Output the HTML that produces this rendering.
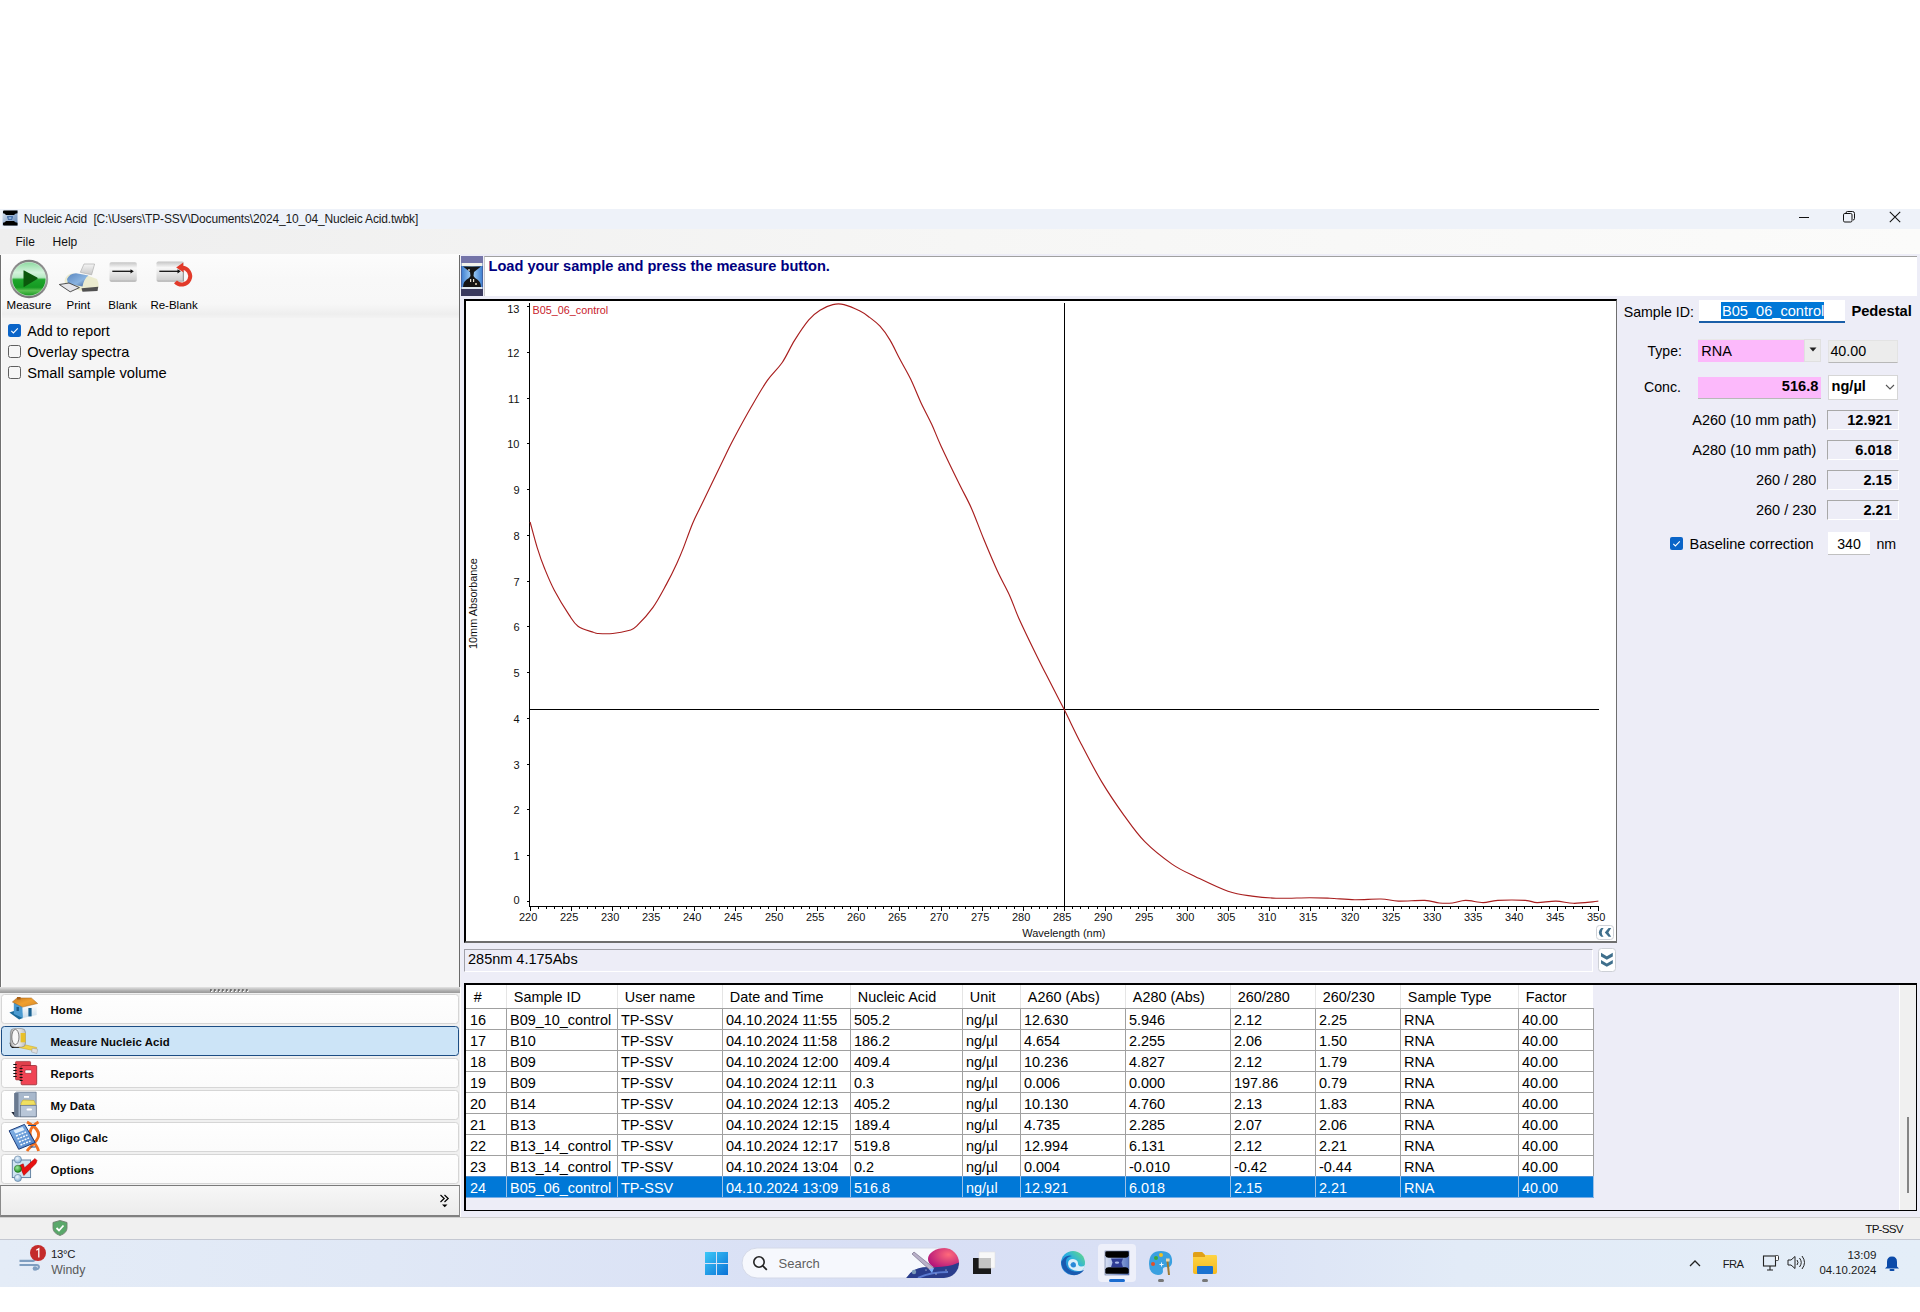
<!DOCTYPE html>
<html><head><meta charset="utf-8"><title>Nucleic Acid</title>
<style>
html,body{margin:0;padding:0;}
body{width:1920px;height:1312px;position:relative;overflow:hidden;background:#fff;font-family:"Liberation Sans",sans-serif;color:#000;}
.t{position:absolute;white-space:nowrap;}
.r{position:absolute;box-sizing:border-box;}
svg{position:absolute;overflow:visible;}
</style></head><body>

<div class="r" style="left:0px;top:209px;width:1920px;height:20px;background:#eef2f9;"></div>
<div class="r" style="left:0px;top:229px;width:1920px;height:25px;background:linear-gradient(to right,#eeeeee,#f6f6f5 50%,#fbfbfa);"></div>
<div class="r" style="left:0px;top:254px;width:459px;height:733px;background:#f5f5f5;"></div>
<div class="r" style="left:0px;top:255px;width:1px;height:732px;background:#707070;"></div>
<div class="r" style="left:1px;top:255px;width:1px;height:732px;background:#fdfdfd;"></div>
<div class="r" style="left:2px;top:254px;width:457px;height:64px;background:linear-gradient(#fcfcfc 0%,#f8f8f8 40%,#f7f7f7 78%,#eeeeee 94%,#f3f3f3 100%);"></div>
<div class="r" style="left:459px;top:255px;width:1px;height:732px;background:#6a6a6a;"></div>
<div class="r" style="left:460px;top:254px;width:1px;height:733px;background:#f0f0f6;"></div>
<div class="r" style="left:461px;top:254px;width:1459px;height:963px;background:#ededf7;"></div>
<svg style="left:461px;top:256px" width="22" height="40" viewBox="0 0 22 40">
<defs><linearGradient id="hb" x1="0" y1="0" x2="1" y2="0"><stop offset="0" stop-color="#3d7ed0"/><stop offset="0.5" stop-color="#a8d4f8"/><stop offset="1" stop-color="#3d7ed0"/></linearGradient></defs>
<rect width="22" height="40" fill="#4a4a78"/>
<rect width="22" height="7" fill="#7474a8"/>
<rect x="0" y="33" width="22" height="7" fill="#3a3a5e"/>
<rect x="0.5" y="7" width="21" height="26" fill="url(#hb)"/>
<rect x="0.5" y="7" width="21" height="3" fill="#f2f2ea"/>
<path d="M2 10.5H20L13 16L12.5 20L14 22Q20 25 20 31H2Q2 25 8 22L9.5 20L9 16Z" fill="#151515"/>
<rect x="0.5" y="31" width="21" height="2" fill="#dfe8f0"/>
<circle cx="8" cy="14" r="0.9" fill="#ddd"/><rect x="9" y="23" width="1.2" height="3" fill="#e8e0d0"/><rect x="12" y="23" width="1.2" height="3" fill="#e8e0d0"/><circle cx="15" cy="28" r="1" fill="#e8d8b8"/>
</svg>
<div class="r" style="left:484px;top:256px;width:1433px;height:40px;background:#fff;border-top:1px solid #a0a0a0;border-left:1px solid #c8c8c8;"></div>
<div class="t" style="top:259.04px;font-size:14.6px;line-height:14.6px;font-weight:700;color:#000080;left:488.50px;">Load your sample and press the measure button.</div>
<div class="r" style="left:464px;top:299px;width:1153px;height:644px;background:#fff;border-top:2px solid #000;border-left:2px solid #000;border-right:1px solid #6e6e6e;border-bottom:2px solid #6e6e6e;"></div>
<svg style="left:0;top:0" width="1920" height="1312" viewBox="0 0 1920 1312">
<path d="M529.5 303V906 M527 901.5H529 M527 855.5H529 M527 809.5H529 M527 764.5H529 M527 718.5H529 M527 672.5H529 M527 626.5H529 M527 581.5H529 M527 535.5H529 M527 489.5H529 M527 443.5H529 M527 398.5H529 M527 352.5H529 M527 306.5H529 M529 906.5H1599 M530.5 906V911 M538.5 906V909 M546.5 906V909 M554.5 906V909 M562.5 906V909 M571.5 906V911 M579.5 906V909 M587.5 906V909 M595.5 906V909 M603.5 906V909 M612.5 906V911 M620.5 906V909 M628.5 906V909 M636.5 906V909 M645.5 906V909 M653.5 906V911 M661.5 906V909 M669.5 906V909 M677.5 906V909 M686.5 906V909 M694.5 906V911 M702.5 906V909 M710.5 906V909 M719.5 906V909 M727.5 906V909 M735.5 906V911 M743.5 906V909 M751.5 906V909 M760.5 906V909 M768.5 906V909 M776.5 906V911 M784.5 906V909 M793.5 906V909 M801.5 906V909 M809.5 906V909 M817.5 906V911 M825.5 906V909 M834.5 906V909 M842.5 906V909 M850.5 906V909 M858.5 906V911 M867.5 906V909 M875.5 906V909 M883.5 906V909 M891.5 906V909 M899.5 906V911 M908.5 906V909 M916.5 906V909 M924.5 906V909 M932.5 906V909 M941.5 906V911 M949.5 906V909 M957.5 906V909 M965.5 906V909 M973.5 906V909 M982.5 906V911 M990.5 906V909 M998.5 906V909 M1006.5 906V909 M1014.5 906V909 M1023.5 906V911 M1031.5 906V909 M1039.5 906V909 M1047.5 906V909 M1056.5 906V909 M1064.5 906V911 M1072.5 906V909 M1080.5 906V909 M1088.5 906V909 M1097.5 906V909 M1105.5 906V911 M1113.5 906V909 M1121.5 906V909 M1130.5 906V909 M1138.5 906V909 M1146.5 906V911 M1154.5 906V909 M1162.5 906V909 M1171.5 906V909 M1179.5 906V909 M1187.5 906V911 M1195.5 906V909 M1204.5 906V909 M1212.5 906V909 M1220.5 906V909 M1228.5 906V911 M1236.5 906V909 M1245.5 906V909 M1253.5 906V909 M1261.5 906V909 M1269.5 906V911 M1278.5 906V909 M1286.5 906V909 M1294.5 906V909 M1302.5 906V909 M1310.5 906V911 M1319.5 906V909 M1327.5 906V909 M1335.5 906V909 M1343.5 906V909 M1352.5 906V911 M1360.5 906V909 M1368.5 906V909 M1376.5 906V909 M1384.5 906V909 M1393.5 906V911 M1401.5 906V909 M1409.5 906V909 M1417.5 906V909 M1425.5 906V909 M1434.5 906V911 M1442.5 906V909 M1450.5 906V909 M1458.5 906V909 M1467.5 906V909 M1475.5 906V911 M1483.5 906V909 M1491.5 906V909 M1499.5 906V909 M1508.5 906V909 M1516.5 906V911 M1524.5 906V909 M1532.5 906V909 M1541.5 906V909 M1549.5 906V909 M1557.5 906V911 M1565.5 906V909 M1573.5 906V909 M1582.5 906V909 M1590.5 906V909 M1598.5 906V911" stroke="#000" stroke-width="1" fill="none" shape-rendering="crispEdges"/>
<path d="M1064.5 303V906 M530 709.5H1599" stroke="#000" stroke-width="1" fill="none" shape-rendering="crispEdges"/>
<path d="M530.1 522.0 C531.3 526.3 534.8 539.9 537.2 547.6 C539.6 555.3 541.6 561.2 544.5 568.3 C547.4 575.4 550.2 582.5 554.3 590.2 C558.4 597.9 564.9 608.6 568.9 614.6 C572.9 620.6 573.9 623.2 578.0 626.2 C582.1 629.2 589.9 631.1 593.3 632.3 C596.7 633.5 595.0 633.3 598.2 633.5 C601.5 633.7 607.7 634.0 612.8 633.5 C617.9 633.0 624.7 631.7 628.7 630.5 C632.7 629.3 632.6 630.1 636.6 626.2 C640.6 622.3 648.0 614.3 653.0 607.3 C658.0 600.3 662.5 591.4 666.5 584.1 C670.5 576.8 674.0 569.5 676.8 563.4 C679.6 557.3 680.9 554.3 683.5 547.6 C686.1 540.9 689.6 530.6 692.7 523.2 C695.9 515.8 696.9 514.4 702.4 503.0 C707.9 491.6 720.3 465.9 725.6 455.0 C730.9 444.1 730.1 445.4 734.4 437.4 C738.7 429.4 745.7 416.5 751.2 407.0 C756.7 397.5 762.0 388.1 767.2 380.6 C772.4 373.1 777.9 368.9 782.4 362.2 C786.9 355.5 790.0 347.7 794.4 340.6 C798.8 333.5 804.5 324.9 808.8 319.8 C813.1 314.7 816.0 312.7 820.0 310.2 C824.0 307.7 828.8 305.5 832.8 304.6 C836.8 303.7 839.5 303.5 844.0 304.6 C848.5 305.7 855.7 308.9 860.0 311.0 C864.3 313.1 866.3 314.9 869.6 317.4 C872.9 319.9 876.6 322.4 880.0 326.2 C883.4 329.9 886.6 334.4 889.9 339.9 C893.2 345.4 896.4 352.5 899.8 359.0 C903.2 365.5 906.9 371.4 910.5 378.8 C914.1 386.2 917.7 395.6 921.2 403.2 C924.8 410.8 928.5 417.4 931.8 424.5 C935.1 431.6 936.4 436.0 941.0 445.9 C945.6 455.8 954.2 473.6 959.3 484.0 C964.4 494.4 967.4 499.2 971.5 508.4 C975.6 517.6 979.4 528.6 983.7 539.0 C988.0 549.4 993.1 561.6 997.4 571.0 C1001.7 580.4 1006.0 587.5 1009.6 595.4 C1013.2 603.3 1014.7 609.1 1018.8 618.2 C1022.9 627.3 1029.4 640.8 1034.0 650.2 C1038.6 659.6 1041.2 664.9 1046.2 674.6 C1051.2 684.3 1057.9 697.2 1063.7 708.6 C1069.5 720.0 1074.5 731.0 1080.8 743.2 C1087.1 755.4 1094.4 769.6 1101.6 781.6 C1108.8 793.6 1116.8 805.3 1124.0 815.3 C1131.2 825.3 1136.8 833.6 1144.8 841.7 C1152.8 849.8 1163.5 858.2 1172.0 864.1 C1180.5 870.0 1186.7 872.4 1196.0 876.9 C1205.3 881.4 1218.7 888.1 1228.0 891.3 C1237.3 894.5 1244.0 895.0 1252.0 896.1 C1260.0 897.2 1266.4 897.9 1276.0 898.2 C1285.6 898.5 1300.7 897.7 1309.7 897.7 C1318.7 897.7 1322.5 897.9 1330.0 898.2 C1337.5 898.5 1346.3 899.6 1354.8 899.7 C1363.3 899.8 1373.7 898.8 1381.0 899.0 C1388.3 899.2 1391.2 900.9 1398.5 901.1 C1405.8 901.3 1418.0 900.1 1424.8 900.4 C1431.6 900.7 1434.8 902.6 1439.4 903.0 C1444.0 903.4 1448.1 903.4 1452.5 903.0 C1456.9 902.6 1460.5 900.5 1465.6 900.4 C1470.7 900.3 1477.8 902.6 1483.1 902.6 C1488.4 902.6 1490.7 900.8 1497.7 900.4 C1504.8 900.0 1518.8 900.0 1525.4 900.4 C1532.0 900.8 1532.0 902.5 1537.1 902.6 C1542.2 902.7 1549.9 901.0 1556.0 901.1 C1562.1 901.2 1567.4 903.2 1573.5 903.3 C1579.6 903.4 1588.4 902.3 1592.5 901.9 C1596.6 901.5 1597.3 901.2 1598.3 901.1" stroke="#a81e1e" stroke-width="1.15" fill="none" stroke-linejoin="round"/>
</svg>
<div class="t" style="top:894.89px;font-size:11px;line-height:11px;color:#111;right:1400.50px;text-align:right;">0</div>
<div class="t" style="top:850.69px;font-size:11px;line-height:11px;color:#111;right:1400.50px;text-align:right;">1</div>
<div class="t" style="top:804.69px;font-size:11px;line-height:11px;color:#111;right:1400.50px;text-align:right;">2</div>
<div class="t" style="top:759.69px;font-size:11px;line-height:11px;color:#111;right:1400.50px;text-align:right;">3</div>
<div class="t" style="top:713.69px;font-size:11px;line-height:11px;color:#111;right:1400.50px;text-align:right;">4</div>
<div class="t" style="top:667.69px;font-size:11px;line-height:11px;color:#111;right:1400.50px;text-align:right;">5</div>
<div class="t" style="top:621.69px;font-size:11px;line-height:11px;color:#111;right:1400.50px;text-align:right;">6</div>
<div class="t" style="top:576.69px;font-size:11px;line-height:11px;color:#111;right:1400.50px;text-align:right;">7</div>
<div class="t" style="top:530.69px;font-size:11px;line-height:11px;color:#111;right:1400.50px;text-align:right;">8</div>
<div class="t" style="top:484.69px;font-size:11px;line-height:11px;color:#111;right:1400.50px;text-align:right;">9</div>
<div class="t" style="top:438.69px;font-size:11px;line-height:11px;color:#111;right:1400.50px;text-align:right;">10</div>
<div class="t" style="top:393.69px;font-size:11px;line-height:11px;color:#111;right:1400.50px;text-align:right;">11</div>
<div class="t" style="top:347.69px;font-size:11px;line-height:11px;color:#111;right:1400.50px;text-align:right;">12</div>
<div class="t" style="top:304.39px;font-size:11px;line-height:11px;color:#111;right:1400.50px;text-align:right;">13</div>
<div class="t" style="top:304.56px;font-size:10.8px;line-height:10.8px;color:#c8202a;left:532.60px;">B05_06_control</div>
<div class="t" style="top:911.59px;font-size:11px;line-height:11px;color:#111;left:428.20px;width:200px;text-align:center;">220</div>
<div class="t" style="top:911.59px;font-size:11px;line-height:11px;color:#111;left:469.20px;width:200px;text-align:center;">225</div>
<div class="t" style="top:911.59px;font-size:11px;line-height:11px;color:#111;left:510.20px;width:200px;text-align:center;">230</div>
<div class="t" style="top:911.59px;font-size:11px;line-height:11px;color:#111;left:551.20px;width:200px;text-align:center;">235</div>
<div class="t" style="top:911.59px;font-size:11px;line-height:11px;color:#111;left:592.20px;width:200px;text-align:center;">240</div>
<div class="t" style="top:911.59px;font-size:11px;line-height:11px;color:#111;left:633.20px;width:200px;text-align:center;">245</div>
<div class="t" style="top:911.59px;font-size:11px;line-height:11px;color:#111;left:674.20px;width:200px;text-align:center;">250</div>
<div class="t" style="top:911.59px;font-size:11px;line-height:11px;color:#111;left:715.20px;width:200px;text-align:center;">255</div>
<div class="t" style="top:911.59px;font-size:11px;line-height:11px;color:#111;left:756.20px;width:200px;text-align:center;">260</div>
<div class="t" style="top:911.59px;font-size:11px;line-height:11px;color:#111;left:797.20px;width:200px;text-align:center;">265</div>
<div class="t" style="top:911.59px;font-size:11px;line-height:11px;color:#111;left:839.20px;width:200px;text-align:center;">270</div>
<div class="t" style="top:911.59px;font-size:11px;line-height:11px;color:#111;left:880.20px;width:200px;text-align:center;">275</div>
<div class="t" style="top:911.59px;font-size:11px;line-height:11px;color:#111;left:921.20px;width:200px;text-align:center;">280</div>
<div class="t" style="top:911.59px;font-size:11px;line-height:11px;color:#111;left:962.20px;width:200px;text-align:center;">285</div>
<div class="t" style="top:911.59px;font-size:11px;line-height:11px;color:#111;left:1003.20px;width:200px;text-align:center;">290</div>
<div class="t" style="top:911.59px;font-size:11px;line-height:11px;color:#111;left:1044.20px;width:200px;text-align:center;">295</div>
<div class="t" style="top:911.59px;font-size:11px;line-height:11px;color:#111;left:1085.20px;width:200px;text-align:center;">300</div>
<div class="t" style="top:911.59px;font-size:11px;line-height:11px;color:#111;left:1126.20px;width:200px;text-align:center;">305</div>
<div class="t" style="top:911.59px;font-size:11px;line-height:11px;color:#111;left:1167.20px;width:200px;text-align:center;">310</div>
<div class="t" style="top:911.59px;font-size:11px;line-height:11px;color:#111;left:1208.20px;width:200px;text-align:center;">315</div>
<div class="t" style="top:911.59px;font-size:11px;line-height:11px;color:#111;left:1250.20px;width:200px;text-align:center;">320</div>
<div class="t" style="top:911.59px;font-size:11px;line-height:11px;color:#111;left:1291.20px;width:200px;text-align:center;">325</div>
<div class="t" style="top:911.59px;font-size:11px;line-height:11px;color:#111;left:1332.20px;width:200px;text-align:center;">330</div>
<div class="t" style="top:911.59px;font-size:11px;line-height:11px;color:#111;left:1373.20px;width:200px;text-align:center;">335</div>
<div class="t" style="top:911.59px;font-size:11px;line-height:11px;color:#111;left:1414.20px;width:200px;text-align:center;">340</div>
<div class="t" style="top:911.59px;font-size:11px;line-height:11px;color:#111;left:1455.20px;width:200px;text-align:center;">345</div>
<div class="t" style="top:911.59px;font-size:11px;line-height:11px;color:#111;left:1496.20px;width:200px;text-align:center;">350</div>
<div class="t" style="top:928.49px;font-size:11px;line-height:11px;color:#111;left:1022.20px;">Wavelength (nm)</div>
<div class="t" style="left:477.2px;top:649px;font-size:10.9px;line-height:10.9px;transform-origin:0 0;transform:rotate(-90deg) translate(0,-9.2px);color:#111">10mm Absorbance</div>
<div class="r" style="left:1596px;top:925px;width:18px;height:15px;background:#fff;border:1px solid #cdd0d6;border-radius:3.5px;"></div>
<svg style="left:1596px;top:925px" width="18" height="15" viewBox="0 0 18 15"><path d="M7.6 3.1H5.2Q2.8 5.4 2.8 7.5Q2.8 9.6 5.2 11.8H7.6Q5.7 9.6 5.7 7.5Q5.7 5.4 7.6 3.1Z M15.2 3.1H12.6L8.8 7.5L12.6 11.8H15.2L12.4 7.5Z" fill="#3f6f8c"/></svg>
<div class="r" style="left:464px;top:949px;width:1129px;height:23px;background:#ededf7;border-top:1px solid #a0a0a8;border-left:1px solid #a0a0a8;border-bottom:1px solid #fff;border-right:1px solid #fff;"></div>
<div class="t" style="top:952.33px;font-size:14.5px;line-height:14.5px;left:468.00px;">285nm 4.175Abs</div>
<div class="r" style="left:1598px;top:948px;width:18px;height:24px;background:#fff;border:1px solid #cdd0d6;border-radius:3.5px;"></div>
<svg style="left:1598px;top:948px" width="18" height="24" viewBox="0 0 18 24"><path d="M3 4.8L8.8 8.2L14.8 4.8V8.4L8.8 11.7L3 8.4Z M3 12L8.8 15.4L14.8 12V15.6L8.8 18.8L3 15.6Z" fill="#3f6f8c"/></svg>
<div class="t" style="top:304.58px;font-size:14.2px;line-height:14.2px;left:1623.70px;">Sample ID:</div>
<div class="r" style="left:1699px;top:300px;width:146px;height:23px;background:#fff;border-bottom:2px solid #1a5ea8;"></div>
<div class="r" style="left:1721px;top:302px;width:103px;height:17px;background:#0078d7;"></div>
<div class="t" style="top:304.24px;font-size:14.6px;line-height:14.6px;color:#fff;left:1722.00px;">B05_06_control</div>
<div class="t" style="top:304.16px;font-size:14.7px;line-height:14.7px;font-weight:700;left:1851.40px;">Pedestal</div>
<div class="t" style="top:344.35px;font-size:14px;line-height:14px;right:238.20px;text-align:right;">Type:</div>
<div class="r" style="left:1698px;top:339px;width:106px;height:23px;background:#fcb9fb;border-top:1px solid #e8e8e8;"></div>
<div class="r" style="left:1804px;top:339px;width:17px;height:23px;background:#ececec;border:1px solid #e0e0e0;"></div>
<svg style="left:1809px;top:347px" width="8" height="5" viewBox="0 0 8 5"><path d="M0.5 0.5H7.5L4 4.5Z" fill="#222"/></svg>
<div class="t" style="top:343.93px;font-size:14.5px;line-height:14.5px;left:1701.20px;">RNA</div>
<div class="r" style="left:1828px;top:340px;width:70px;height:23px;background:#ececec;border:1px solid #e3e3e3;border-bottom:1px solid #b8b8b8;"></div>
<div class="t" style="top:344.10px;font-size:14.3px;line-height:14.3px;left:1830.40px;">40.00</div>
<div class="t" style="top:379.58px;font-size:14.2px;line-height:14.2px;right:239.00px;text-align:right;">Conc.</div>
<div class="r" style="left:1698px;top:377px;width:123px;height:22px;background:#fcb9fb;border-bottom:1px solid #b8b8b8;"></div>
<div class="t" style="top:379.24px;font-size:14.6px;line-height:14.6px;font-weight:700;right:101.70px;text-align:right;">516.8</div>
<div class="r" style="left:1828px;top:375px;width:70px;height:25px;background:#fff;border:1px solid #d6d6d6;"></div>
<div class="t" style="top:379.24px;font-size:14.6px;line-height:14.6px;font-weight:700;left:1831.50px;">ng/µl</div>
<svg style="left:1885px;top:384px" width="10" height="6" viewBox="0 0 10 6"><path d="M1 1L5 5L9 1" stroke="#555" stroke-width="1.1" fill="none"/></svg>
<div class="r" style="left:1827px;top:410px;width:72px;height:20px;border-top:1px solid #a8a8a8;border-left:1px solid #a8a8a8;border-right:1px solid #fff;border-bottom:1px solid #fff;"></div>
<div class="t" style="top:412.73px;font-size:14.5px;line-height:14.5px;right:103.60px;text-align:right;">A260 (10 mm path)</div>
<div class="t" style="top:412.64px;font-size:14.6px;line-height:14.6px;font-weight:700;right:28.20px;text-align:right;">12.921</div>
<div class="r" style="left:1827px;top:440px;width:72px;height:20px;border-top:1px solid #a8a8a8;border-left:1px solid #a8a8a8;border-right:1px solid #fff;border-bottom:1px solid #fff;"></div>
<div class="t" style="top:442.73px;font-size:14.5px;line-height:14.5px;right:103.60px;text-align:right;">A280 (10 mm path)</div>
<div class="t" style="top:442.64px;font-size:14.6px;line-height:14.6px;font-weight:700;right:28.20px;text-align:right;">6.018</div>
<div class="r" style="left:1827px;top:470px;width:72px;height:20px;border-top:1px solid #a8a8a8;border-left:1px solid #a8a8a8;border-right:1px solid #fff;border-bottom:1px solid #fff;"></div>
<div class="t" style="top:472.73px;font-size:14.5px;line-height:14.5px;right:103.60px;text-align:right;">260 / 280</div>
<div class="t" style="top:472.64px;font-size:14.6px;line-height:14.6px;font-weight:700;right:28.20px;text-align:right;">2.15</div>
<div class="r" style="left:1827px;top:500px;width:72px;height:20px;border-top:1px solid #a8a8a8;border-left:1px solid #a8a8a8;border-right:1px solid #fff;border-bottom:1px solid #fff;"></div>
<div class="t" style="top:502.73px;font-size:14.5px;line-height:14.5px;right:103.60px;text-align:right;">260 / 230</div>
<div class="t" style="top:502.64px;font-size:14.6px;line-height:14.6px;font-weight:700;right:28.20px;text-align:right;">2.21</div>
<div class="r" style="left:1670px;top:537px;width:13px;height:13px;background:#0a64c8;border-radius:2px;"></div>
<svg style="left:1670px;top:537px" width="13" height="13" viewBox="0 0 13 13"><path d="M3.3 6.8L5.4 8.9L9.8 4.4" stroke="#fff" stroke-width="1.1" fill="none"/></svg>
<div class="t" style="top:536.64px;font-size:14.6px;line-height:14.6px;left:1689.50px;">Baseline correction</div>
<div class="r" style="left:1828px;top:532px;width:42px;height:23px;background:#fff;border-bottom:1px solid #c0c0c0;"></div>
<div class="t" style="top:536.98px;font-size:14.2px;line-height:14.2px;left:1749.00px;width:200px;text-align:center;">340</div>
<div class="t" style="top:536.98px;font-size:14.2px;line-height:14.2px;left:1876.40px;">nm</div>
<div class="r" style="left:464px;top:983px;width:1453px;height:228px;background:#ededf7;border-top:2px solid #000;border-left:2px solid #000;border-right:1px solid #000;border-bottom:1px solid #000;"></div>
<div class="r" style="left:1899px;top:985px;width:1px;height:225px;background:#fff;"></div>
<div class="r" style="left:1900px;top:985px;width:16px;height:225px;background:#f0f0f0;"></div>
<div class="r" style="left:1907px;top:1117px;width:2px;height:76px;background:#858585;"></div>
<div class="r" style="left:466px;top:985px;width:1127px;height:23px;background:#fff;"></div>
<div class="r" style="left:506px;top:985px;width:1px;height:23px;background:#e5e5e5;"></div>
<div class="r" style="left:617px;top:985px;width:1px;height:23px;background:#e5e5e5;"></div>
<div class="r" style="left:722px;top:985px;width:1px;height:23px;background:#e5e5e5;"></div>
<div class="r" style="left:850px;top:985px;width:1px;height:23px;background:#e5e5e5;"></div>
<div class="r" style="left:962px;top:985px;width:1px;height:23px;background:#e5e5e5;"></div>
<div class="r" style="left:1020px;top:985px;width:1px;height:23px;background:#e5e5e5;"></div>
<div class="r" style="left:1125px;top:985px;width:1px;height:23px;background:#e5e5e5;"></div>
<div class="r" style="left:1230px;top:985px;width:1px;height:23px;background:#e5e5e5;"></div>
<div class="r" style="left:1315px;top:985px;width:1px;height:23px;background:#e5e5e5;"></div>
<div class="r" style="left:1400px;top:985px;width:1px;height:23px;background:#e5e5e5;"></div>
<div class="r" style="left:1518px;top:985px;width:1px;height:23px;background:#e5e5e5;"></div>
<div class="t" style="top:989.51px;font-size:14.4px;line-height:14.4px;left:473.80px;">#</div>
<div class="t" style="top:989.51px;font-size:14.4px;line-height:14.4px;left:513.80px;">Sample ID</div>
<div class="t" style="top:989.51px;font-size:14.4px;line-height:14.4px;left:624.80px;">User name</div>
<div class="t" style="top:989.51px;font-size:14.4px;line-height:14.4px;left:729.80px;">Date and Time</div>
<div class="t" style="top:989.51px;font-size:14.4px;line-height:14.4px;left:857.80px;">Nucleic Acid</div>
<div class="t" style="top:989.51px;font-size:14.4px;line-height:14.4px;left:969.80px;">Unit</div>
<div class="t" style="top:989.51px;font-size:14.4px;line-height:14.4px;left:1027.80px;">A260 (Abs)</div>
<div class="t" style="top:989.51px;font-size:14.4px;line-height:14.4px;left:1132.80px;">A280 (Abs)</div>
<div class="t" style="top:989.51px;font-size:14.4px;line-height:14.4px;left:1237.80px;">260/280</div>
<div class="t" style="top:989.51px;font-size:14.4px;line-height:14.4px;left:1322.80px;">260/230</div>
<div class="t" style="top:989.51px;font-size:14.4px;line-height:14.4px;left:1407.80px;">Sample Type</div>
<div class="t" style="top:989.51px;font-size:14.4px;line-height:14.4px;left:1525.80px;">Factor</div>
<div class="r" style="left:466px;top:1008px;width:1128px;height:22px;background:#fff;"></div>
<div class="r" style="left:466px;top:1008px;width:1128px;height:1px;background:#a0a0a0;"></div>
<div class="r" style="left:506px;top:1008px;width:1px;height:22px;background:#a0a0a0;"></div>
<div class="r" style="left:617px;top:1008px;width:1px;height:22px;background:#a0a0a0;"></div>
<div class="r" style="left:722px;top:1008px;width:1px;height:22px;background:#a0a0a0;"></div>
<div class="r" style="left:850px;top:1008px;width:1px;height:22px;background:#a0a0a0;"></div>
<div class="r" style="left:962px;top:1008px;width:1px;height:22px;background:#a0a0a0;"></div>
<div class="r" style="left:1020px;top:1008px;width:1px;height:22px;background:#a0a0a0;"></div>
<div class="r" style="left:1125px;top:1008px;width:1px;height:22px;background:#a0a0a0;"></div>
<div class="r" style="left:1230px;top:1008px;width:1px;height:22px;background:#a0a0a0;"></div>
<div class="r" style="left:1315px;top:1008px;width:1px;height:22px;background:#a0a0a0;"></div>
<div class="r" style="left:1400px;top:1008px;width:1px;height:22px;background:#a0a0a0;"></div>
<div class="r" style="left:1518px;top:1008px;width:1px;height:22px;background:#a0a0a0;"></div>
<div class="r" style="left:1593px;top:1008px;width:1px;height:22px;background:#a0a0a0;"></div>
<div class="t" style="top:1012.97px;font-size:14.45px;line-height:14.45px;left:470.00px;">16</div>
<div class="t" style="top:1012.97px;font-size:14.45px;line-height:14.45px;left:510.00px;">B09_10_control</div>
<div class="t" style="top:1012.97px;font-size:14.45px;line-height:14.45px;left:621.00px;">TP-SSV</div>
<div class="t" style="top:1012.97px;font-size:14.45px;line-height:14.45px;left:726.00px;">04.10.2024 11:55</div>
<div class="t" style="top:1012.97px;font-size:14.45px;line-height:14.45px;left:854.00px;">505.2</div>
<div class="t" style="top:1012.97px;font-size:14.45px;line-height:14.45px;left:966.00px;">ng/µl</div>
<div class="t" style="top:1012.97px;font-size:14.45px;line-height:14.45px;left:1024.00px;">12.630</div>
<div class="t" style="top:1012.97px;font-size:14.45px;line-height:14.45px;left:1129.00px;">5.946</div>
<div class="t" style="top:1012.97px;font-size:14.45px;line-height:14.45px;left:1234.00px;">2.12</div>
<div class="t" style="top:1012.97px;font-size:14.45px;line-height:14.45px;left:1319.00px;">2.25</div>
<div class="t" style="top:1012.97px;font-size:14.45px;line-height:14.45px;left:1404.00px;">RNA</div>
<div class="t" style="top:1012.97px;font-size:14.45px;line-height:14.45px;left:1522.00px;">40.00</div>
<div class="r" style="left:466px;top:1029px;width:1128px;height:22px;background:#fff;"></div>
<div class="r" style="left:466px;top:1029px;width:1128px;height:1px;background:#a0a0a0;"></div>
<div class="r" style="left:506px;top:1029px;width:1px;height:22px;background:#a0a0a0;"></div>
<div class="r" style="left:617px;top:1029px;width:1px;height:22px;background:#a0a0a0;"></div>
<div class="r" style="left:722px;top:1029px;width:1px;height:22px;background:#a0a0a0;"></div>
<div class="r" style="left:850px;top:1029px;width:1px;height:22px;background:#a0a0a0;"></div>
<div class="r" style="left:962px;top:1029px;width:1px;height:22px;background:#a0a0a0;"></div>
<div class="r" style="left:1020px;top:1029px;width:1px;height:22px;background:#a0a0a0;"></div>
<div class="r" style="left:1125px;top:1029px;width:1px;height:22px;background:#a0a0a0;"></div>
<div class="r" style="left:1230px;top:1029px;width:1px;height:22px;background:#a0a0a0;"></div>
<div class="r" style="left:1315px;top:1029px;width:1px;height:22px;background:#a0a0a0;"></div>
<div class="r" style="left:1400px;top:1029px;width:1px;height:22px;background:#a0a0a0;"></div>
<div class="r" style="left:1518px;top:1029px;width:1px;height:22px;background:#a0a0a0;"></div>
<div class="r" style="left:1593px;top:1029px;width:1px;height:22px;background:#a0a0a0;"></div>
<div class="t" style="top:1033.97px;font-size:14.45px;line-height:14.45px;left:470.00px;">17</div>
<div class="t" style="top:1033.97px;font-size:14.45px;line-height:14.45px;left:510.00px;">B10</div>
<div class="t" style="top:1033.97px;font-size:14.45px;line-height:14.45px;left:621.00px;">TP-SSV</div>
<div class="t" style="top:1033.97px;font-size:14.45px;line-height:14.45px;left:726.00px;">04.10.2024 11:58</div>
<div class="t" style="top:1033.97px;font-size:14.45px;line-height:14.45px;left:854.00px;">186.2</div>
<div class="t" style="top:1033.97px;font-size:14.45px;line-height:14.45px;left:966.00px;">ng/µl</div>
<div class="t" style="top:1033.97px;font-size:14.45px;line-height:14.45px;left:1024.00px;">4.654</div>
<div class="t" style="top:1033.97px;font-size:14.45px;line-height:14.45px;left:1129.00px;">2.255</div>
<div class="t" style="top:1033.97px;font-size:14.45px;line-height:14.45px;left:1234.00px;">2.06</div>
<div class="t" style="top:1033.97px;font-size:14.45px;line-height:14.45px;left:1319.00px;">1.50</div>
<div class="t" style="top:1033.97px;font-size:14.45px;line-height:14.45px;left:1404.00px;">RNA</div>
<div class="t" style="top:1033.97px;font-size:14.45px;line-height:14.45px;left:1522.00px;">40.00</div>
<div class="r" style="left:466px;top:1050px;width:1128px;height:22px;background:#fff;"></div>
<div class="r" style="left:466px;top:1050px;width:1128px;height:1px;background:#a0a0a0;"></div>
<div class="r" style="left:506px;top:1050px;width:1px;height:22px;background:#a0a0a0;"></div>
<div class="r" style="left:617px;top:1050px;width:1px;height:22px;background:#a0a0a0;"></div>
<div class="r" style="left:722px;top:1050px;width:1px;height:22px;background:#a0a0a0;"></div>
<div class="r" style="left:850px;top:1050px;width:1px;height:22px;background:#a0a0a0;"></div>
<div class="r" style="left:962px;top:1050px;width:1px;height:22px;background:#a0a0a0;"></div>
<div class="r" style="left:1020px;top:1050px;width:1px;height:22px;background:#a0a0a0;"></div>
<div class="r" style="left:1125px;top:1050px;width:1px;height:22px;background:#a0a0a0;"></div>
<div class="r" style="left:1230px;top:1050px;width:1px;height:22px;background:#a0a0a0;"></div>
<div class="r" style="left:1315px;top:1050px;width:1px;height:22px;background:#a0a0a0;"></div>
<div class="r" style="left:1400px;top:1050px;width:1px;height:22px;background:#a0a0a0;"></div>
<div class="r" style="left:1518px;top:1050px;width:1px;height:22px;background:#a0a0a0;"></div>
<div class="r" style="left:1593px;top:1050px;width:1px;height:22px;background:#a0a0a0;"></div>
<div class="t" style="top:1054.97px;font-size:14.45px;line-height:14.45px;left:470.00px;">18</div>
<div class="t" style="top:1054.97px;font-size:14.45px;line-height:14.45px;left:510.00px;">B09</div>
<div class="t" style="top:1054.97px;font-size:14.45px;line-height:14.45px;left:621.00px;">TP-SSV</div>
<div class="t" style="top:1054.97px;font-size:14.45px;line-height:14.45px;left:726.00px;">04.10.2024 12:00</div>
<div class="t" style="top:1054.97px;font-size:14.45px;line-height:14.45px;left:854.00px;">409.4</div>
<div class="t" style="top:1054.97px;font-size:14.45px;line-height:14.45px;left:966.00px;">ng/µl</div>
<div class="t" style="top:1054.97px;font-size:14.45px;line-height:14.45px;left:1024.00px;">10.236</div>
<div class="t" style="top:1054.97px;font-size:14.45px;line-height:14.45px;left:1129.00px;">4.827</div>
<div class="t" style="top:1054.97px;font-size:14.45px;line-height:14.45px;left:1234.00px;">2.12</div>
<div class="t" style="top:1054.97px;font-size:14.45px;line-height:14.45px;left:1319.00px;">1.79</div>
<div class="t" style="top:1054.97px;font-size:14.45px;line-height:14.45px;left:1404.00px;">RNA</div>
<div class="t" style="top:1054.97px;font-size:14.45px;line-height:14.45px;left:1522.00px;">40.00</div>
<div class="r" style="left:466px;top:1071px;width:1128px;height:22px;background:#fff;"></div>
<div class="r" style="left:466px;top:1071px;width:1128px;height:1px;background:#a0a0a0;"></div>
<div class="r" style="left:506px;top:1071px;width:1px;height:22px;background:#a0a0a0;"></div>
<div class="r" style="left:617px;top:1071px;width:1px;height:22px;background:#a0a0a0;"></div>
<div class="r" style="left:722px;top:1071px;width:1px;height:22px;background:#a0a0a0;"></div>
<div class="r" style="left:850px;top:1071px;width:1px;height:22px;background:#a0a0a0;"></div>
<div class="r" style="left:962px;top:1071px;width:1px;height:22px;background:#a0a0a0;"></div>
<div class="r" style="left:1020px;top:1071px;width:1px;height:22px;background:#a0a0a0;"></div>
<div class="r" style="left:1125px;top:1071px;width:1px;height:22px;background:#a0a0a0;"></div>
<div class="r" style="left:1230px;top:1071px;width:1px;height:22px;background:#a0a0a0;"></div>
<div class="r" style="left:1315px;top:1071px;width:1px;height:22px;background:#a0a0a0;"></div>
<div class="r" style="left:1400px;top:1071px;width:1px;height:22px;background:#a0a0a0;"></div>
<div class="r" style="left:1518px;top:1071px;width:1px;height:22px;background:#a0a0a0;"></div>
<div class="r" style="left:1593px;top:1071px;width:1px;height:22px;background:#a0a0a0;"></div>
<div class="t" style="top:1075.97px;font-size:14.45px;line-height:14.45px;left:470.00px;">19</div>
<div class="t" style="top:1075.97px;font-size:14.45px;line-height:14.45px;left:510.00px;">B09</div>
<div class="t" style="top:1075.97px;font-size:14.45px;line-height:14.45px;left:621.00px;">TP-SSV</div>
<div class="t" style="top:1075.97px;font-size:14.45px;line-height:14.45px;left:726.00px;">04.10.2024 12:11</div>
<div class="t" style="top:1075.97px;font-size:14.45px;line-height:14.45px;left:854.00px;">0.3</div>
<div class="t" style="top:1075.97px;font-size:14.45px;line-height:14.45px;left:966.00px;">ng/µl</div>
<div class="t" style="top:1075.97px;font-size:14.45px;line-height:14.45px;left:1024.00px;">0.006</div>
<div class="t" style="top:1075.97px;font-size:14.45px;line-height:14.45px;left:1129.00px;">0.000</div>
<div class="t" style="top:1075.97px;font-size:14.45px;line-height:14.45px;left:1234.00px;">197.86</div>
<div class="t" style="top:1075.97px;font-size:14.45px;line-height:14.45px;left:1319.00px;">0.79</div>
<div class="t" style="top:1075.97px;font-size:14.45px;line-height:14.45px;left:1404.00px;">RNA</div>
<div class="t" style="top:1075.97px;font-size:14.45px;line-height:14.45px;left:1522.00px;">40.00</div>
<div class="r" style="left:466px;top:1092px;width:1128px;height:22px;background:#fff;"></div>
<div class="r" style="left:466px;top:1092px;width:1128px;height:1px;background:#a0a0a0;"></div>
<div class="r" style="left:506px;top:1092px;width:1px;height:22px;background:#a0a0a0;"></div>
<div class="r" style="left:617px;top:1092px;width:1px;height:22px;background:#a0a0a0;"></div>
<div class="r" style="left:722px;top:1092px;width:1px;height:22px;background:#a0a0a0;"></div>
<div class="r" style="left:850px;top:1092px;width:1px;height:22px;background:#a0a0a0;"></div>
<div class="r" style="left:962px;top:1092px;width:1px;height:22px;background:#a0a0a0;"></div>
<div class="r" style="left:1020px;top:1092px;width:1px;height:22px;background:#a0a0a0;"></div>
<div class="r" style="left:1125px;top:1092px;width:1px;height:22px;background:#a0a0a0;"></div>
<div class="r" style="left:1230px;top:1092px;width:1px;height:22px;background:#a0a0a0;"></div>
<div class="r" style="left:1315px;top:1092px;width:1px;height:22px;background:#a0a0a0;"></div>
<div class="r" style="left:1400px;top:1092px;width:1px;height:22px;background:#a0a0a0;"></div>
<div class="r" style="left:1518px;top:1092px;width:1px;height:22px;background:#a0a0a0;"></div>
<div class="r" style="left:1593px;top:1092px;width:1px;height:22px;background:#a0a0a0;"></div>
<div class="t" style="top:1096.97px;font-size:14.45px;line-height:14.45px;left:470.00px;">20</div>
<div class="t" style="top:1096.97px;font-size:14.45px;line-height:14.45px;left:510.00px;">B14</div>
<div class="t" style="top:1096.97px;font-size:14.45px;line-height:14.45px;left:621.00px;">TP-SSV</div>
<div class="t" style="top:1096.97px;font-size:14.45px;line-height:14.45px;left:726.00px;">04.10.2024 12:13</div>
<div class="t" style="top:1096.97px;font-size:14.45px;line-height:14.45px;left:854.00px;">405.2</div>
<div class="t" style="top:1096.97px;font-size:14.45px;line-height:14.45px;left:966.00px;">ng/µl</div>
<div class="t" style="top:1096.97px;font-size:14.45px;line-height:14.45px;left:1024.00px;">10.130</div>
<div class="t" style="top:1096.97px;font-size:14.45px;line-height:14.45px;left:1129.00px;">4.760</div>
<div class="t" style="top:1096.97px;font-size:14.45px;line-height:14.45px;left:1234.00px;">2.13</div>
<div class="t" style="top:1096.97px;font-size:14.45px;line-height:14.45px;left:1319.00px;">1.83</div>
<div class="t" style="top:1096.97px;font-size:14.45px;line-height:14.45px;left:1404.00px;">RNA</div>
<div class="t" style="top:1096.97px;font-size:14.45px;line-height:14.45px;left:1522.00px;">40.00</div>
<div class="r" style="left:466px;top:1113px;width:1128px;height:22px;background:#fff;"></div>
<div class="r" style="left:466px;top:1113px;width:1128px;height:1px;background:#a0a0a0;"></div>
<div class="r" style="left:506px;top:1113px;width:1px;height:22px;background:#a0a0a0;"></div>
<div class="r" style="left:617px;top:1113px;width:1px;height:22px;background:#a0a0a0;"></div>
<div class="r" style="left:722px;top:1113px;width:1px;height:22px;background:#a0a0a0;"></div>
<div class="r" style="left:850px;top:1113px;width:1px;height:22px;background:#a0a0a0;"></div>
<div class="r" style="left:962px;top:1113px;width:1px;height:22px;background:#a0a0a0;"></div>
<div class="r" style="left:1020px;top:1113px;width:1px;height:22px;background:#a0a0a0;"></div>
<div class="r" style="left:1125px;top:1113px;width:1px;height:22px;background:#a0a0a0;"></div>
<div class="r" style="left:1230px;top:1113px;width:1px;height:22px;background:#a0a0a0;"></div>
<div class="r" style="left:1315px;top:1113px;width:1px;height:22px;background:#a0a0a0;"></div>
<div class="r" style="left:1400px;top:1113px;width:1px;height:22px;background:#a0a0a0;"></div>
<div class="r" style="left:1518px;top:1113px;width:1px;height:22px;background:#a0a0a0;"></div>
<div class="r" style="left:1593px;top:1113px;width:1px;height:22px;background:#a0a0a0;"></div>
<div class="t" style="top:1117.97px;font-size:14.45px;line-height:14.45px;left:470.00px;">21</div>
<div class="t" style="top:1117.97px;font-size:14.45px;line-height:14.45px;left:510.00px;">B13</div>
<div class="t" style="top:1117.97px;font-size:14.45px;line-height:14.45px;left:621.00px;">TP-SSV</div>
<div class="t" style="top:1117.97px;font-size:14.45px;line-height:14.45px;left:726.00px;">04.10.2024 12:15</div>
<div class="t" style="top:1117.97px;font-size:14.45px;line-height:14.45px;left:854.00px;">189.4</div>
<div class="t" style="top:1117.97px;font-size:14.45px;line-height:14.45px;left:966.00px;">ng/µl</div>
<div class="t" style="top:1117.97px;font-size:14.45px;line-height:14.45px;left:1024.00px;">4.735</div>
<div class="t" style="top:1117.97px;font-size:14.45px;line-height:14.45px;left:1129.00px;">2.285</div>
<div class="t" style="top:1117.97px;font-size:14.45px;line-height:14.45px;left:1234.00px;">2.07</div>
<div class="t" style="top:1117.97px;font-size:14.45px;line-height:14.45px;left:1319.00px;">2.06</div>
<div class="t" style="top:1117.97px;font-size:14.45px;line-height:14.45px;left:1404.00px;">RNA</div>
<div class="t" style="top:1117.97px;font-size:14.45px;line-height:14.45px;left:1522.00px;">40.00</div>
<div class="r" style="left:466px;top:1134px;width:1128px;height:22px;background:#fff;"></div>
<div class="r" style="left:466px;top:1134px;width:1128px;height:1px;background:#a0a0a0;"></div>
<div class="r" style="left:506px;top:1134px;width:1px;height:22px;background:#a0a0a0;"></div>
<div class="r" style="left:617px;top:1134px;width:1px;height:22px;background:#a0a0a0;"></div>
<div class="r" style="left:722px;top:1134px;width:1px;height:22px;background:#a0a0a0;"></div>
<div class="r" style="left:850px;top:1134px;width:1px;height:22px;background:#a0a0a0;"></div>
<div class="r" style="left:962px;top:1134px;width:1px;height:22px;background:#a0a0a0;"></div>
<div class="r" style="left:1020px;top:1134px;width:1px;height:22px;background:#a0a0a0;"></div>
<div class="r" style="left:1125px;top:1134px;width:1px;height:22px;background:#a0a0a0;"></div>
<div class="r" style="left:1230px;top:1134px;width:1px;height:22px;background:#a0a0a0;"></div>
<div class="r" style="left:1315px;top:1134px;width:1px;height:22px;background:#a0a0a0;"></div>
<div class="r" style="left:1400px;top:1134px;width:1px;height:22px;background:#a0a0a0;"></div>
<div class="r" style="left:1518px;top:1134px;width:1px;height:22px;background:#a0a0a0;"></div>
<div class="r" style="left:1593px;top:1134px;width:1px;height:22px;background:#a0a0a0;"></div>
<div class="t" style="top:1138.97px;font-size:14.45px;line-height:14.45px;left:470.00px;">22</div>
<div class="t" style="top:1138.97px;font-size:14.45px;line-height:14.45px;left:510.00px;">B13_14_control</div>
<div class="t" style="top:1138.97px;font-size:14.45px;line-height:14.45px;left:621.00px;">TP-SSV</div>
<div class="t" style="top:1138.97px;font-size:14.45px;line-height:14.45px;left:726.00px;">04.10.2024 12:17</div>
<div class="t" style="top:1138.97px;font-size:14.45px;line-height:14.45px;left:854.00px;">519.8</div>
<div class="t" style="top:1138.97px;font-size:14.45px;line-height:14.45px;left:966.00px;">ng/µl</div>
<div class="t" style="top:1138.97px;font-size:14.45px;line-height:14.45px;left:1024.00px;">12.994</div>
<div class="t" style="top:1138.97px;font-size:14.45px;line-height:14.45px;left:1129.00px;">6.131</div>
<div class="t" style="top:1138.97px;font-size:14.45px;line-height:14.45px;left:1234.00px;">2.12</div>
<div class="t" style="top:1138.97px;font-size:14.45px;line-height:14.45px;left:1319.00px;">2.21</div>
<div class="t" style="top:1138.97px;font-size:14.45px;line-height:14.45px;left:1404.00px;">RNA</div>
<div class="t" style="top:1138.97px;font-size:14.45px;line-height:14.45px;left:1522.00px;">40.00</div>
<div class="r" style="left:466px;top:1155px;width:1128px;height:22px;background:#fff;"></div>
<div class="r" style="left:466px;top:1155px;width:1128px;height:1px;background:#a0a0a0;"></div>
<div class="r" style="left:506px;top:1155px;width:1px;height:22px;background:#a0a0a0;"></div>
<div class="r" style="left:617px;top:1155px;width:1px;height:22px;background:#a0a0a0;"></div>
<div class="r" style="left:722px;top:1155px;width:1px;height:22px;background:#a0a0a0;"></div>
<div class="r" style="left:850px;top:1155px;width:1px;height:22px;background:#a0a0a0;"></div>
<div class="r" style="left:962px;top:1155px;width:1px;height:22px;background:#a0a0a0;"></div>
<div class="r" style="left:1020px;top:1155px;width:1px;height:22px;background:#a0a0a0;"></div>
<div class="r" style="left:1125px;top:1155px;width:1px;height:22px;background:#a0a0a0;"></div>
<div class="r" style="left:1230px;top:1155px;width:1px;height:22px;background:#a0a0a0;"></div>
<div class="r" style="left:1315px;top:1155px;width:1px;height:22px;background:#a0a0a0;"></div>
<div class="r" style="left:1400px;top:1155px;width:1px;height:22px;background:#a0a0a0;"></div>
<div class="r" style="left:1518px;top:1155px;width:1px;height:22px;background:#a0a0a0;"></div>
<div class="r" style="left:1593px;top:1155px;width:1px;height:22px;background:#a0a0a0;"></div>
<div class="t" style="top:1159.97px;font-size:14.45px;line-height:14.45px;left:470.00px;">23</div>
<div class="t" style="top:1159.97px;font-size:14.45px;line-height:14.45px;left:510.00px;">B13_14_control</div>
<div class="t" style="top:1159.97px;font-size:14.45px;line-height:14.45px;left:621.00px;">TP-SSV</div>
<div class="t" style="top:1159.97px;font-size:14.45px;line-height:14.45px;left:726.00px;">04.10.2024 13:04</div>
<div class="t" style="top:1159.97px;font-size:14.45px;line-height:14.45px;left:854.00px;">0.2</div>
<div class="t" style="top:1159.97px;font-size:14.45px;line-height:14.45px;left:966.00px;">ng/µl</div>
<div class="t" style="top:1159.97px;font-size:14.45px;line-height:14.45px;left:1024.00px;">0.004</div>
<div class="t" style="top:1159.97px;font-size:14.45px;line-height:14.45px;left:1129.00px;">-0.010</div>
<div class="t" style="top:1159.97px;font-size:14.45px;line-height:14.45px;left:1234.00px;">-0.42</div>
<div class="t" style="top:1159.97px;font-size:14.45px;line-height:14.45px;left:1319.00px;">-0.44</div>
<div class="t" style="top:1159.97px;font-size:14.45px;line-height:14.45px;left:1404.00px;">RNA</div>
<div class="t" style="top:1159.97px;font-size:14.45px;line-height:14.45px;left:1522.00px;">40.00</div>
<div class="r" style="left:466px;top:1176px;width:1128px;height:22px;background:#0078d7;"></div>
<div class="r" style="left:466px;top:1176px;width:1128px;height:1px;background:#4a90d8;"></div>
<div class="r" style="left:506px;top:1176px;width:1px;height:22px;background:#9cc0e6;"></div>
<div class="r" style="left:617px;top:1176px;width:1px;height:22px;background:#9cc0e6;"></div>
<div class="r" style="left:722px;top:1176px;width:1px;height:22px;background:#9cc0e6;"></div>
<div class="r" style="left:850px;top:1176px;width:1px;height:22px;background:#9cc0e6;"></div>
<div class="r" style="left:962px;top:1176px;width:1px;height:22px;background:#9cc0e6;"></div>
<div class="r" style="left:1020px;top:1176px;width:1px;height:22px;background:#9cc0e6;"></div>
<div class="r" style="left:1125px;top:1176px;width:1px;height:22px;background:#9cc0e6;"></div>
<div class="r" style="left:1230px;top:1176px;width:1px;height:22px;background:#9cc0e6;"></div>
<div class="r" style="left:1315px;top:1176px;width:1px;height:22px;background:#9cc0e6;"></div>
<div class="r" style="left:1400px;top:1176px;width:1px;height:22px;background:#9cc0e6;"></div>
<div class="r" style="left:1518px;top:1176px;width:1px;height:22px;background:#9cc0e6;"></div>
<div class="r" style="left:1593px;top:1176px;width:1px;height:22px;background:#9cc0e6;"></div>
<div class="t" style="top:1180.97px;font-size:14.45px;line-height:14.45px;color:#fff;left:470.00px;">24</div>
<div class="t" style="top:1180.97px;font-size:14.45px;line-height:14.45px;color:#fff;left:510.00px;">B05_06_control</div>
<div class="t" style="top:1180.97px;font-size:14.45px;line-height:14.45px;color:#fff;left:621.00px;">TP-SSV</div>
<div class="t" style="top:1180.97px;font-size:14.45px;line-height:14.45px;color:#fff;left:726.00px;">04.10.2024 13:09</div>
<div class="t" style="top:1180.97px;font-size:14.45px;line-height:14.45px;color:#fff;left:854.00px;">516.8</div>
<div class="t" style="top:1180.97px;font-size:14.45px;line-height:14.45px;color:#fff;left:966.00px;">ng/µl</div>
<div class="t" style="top:1180.97px;font-size:14.45px;line-height:14.45px;color:#fff;left:1024.00px;">12.921</div>
<div class="t" style="top:1180.97px;font-size:14.45px;line-height:14.45px;color:#fff;left:1129.00px;">6.018</div>
<div class="t" style="top:1180.97px;font-size:14.45px;line-height:14.45px;color:#fff;left:1234.00px;">2.15</div>
<div class="t" style="top:1180.97px;font-size:14.45px;line-height:14.45px;color:#fff;left:1319.00px;">2.21</div>
<div class="t" style="top:1180.97px;font-size:14.45px;line-height:14.45px;color:#fff;left:1404.00px;">RNA</div>
<div class="t" style="top:1180.97px;font-size:14.45px;line-height:14.45px;color:#fff;left:1522.00px;">40.00</div>
<div class="r" style="left:466px;top:1197px;width:1128px;height:1px;background:#74ace6;"></div>
<svg style="left:2px;top:210px" width="16" height="16" viewBox="0 0 16 16"><defs><linearGradient id="tg" x1="0" y1="0" x2="1" y2="1"><stop offset="0" stop-color="#dfe9f5"/><stop offset="1" stop-color="#5a7fb0"/></linearGradient></defs><rect x="0.5" y="0.5" width="15" height="15" fill="url(#tg)"/><path d="M1 1.5Q1 0.5 2 0.5H15.5V3.2Q13 3.5 12 5H4Q3 3.5 1 3.2Z" fill="#000"/><path d="M1 12.8Q3 12.5 4 11H12Q13 12.5 15.5 12.8V15.5H2Q1 15.5 1 14.5Z" fill="#000"/><path d="M5 6.2H11L10 9.8H6Z" fill="#2c5a9c"/><rect x="6.5" y="7.3" width="3" height="1.4" fill="#b8d4f0"/></svg>
<div class="t" style="top:212.74px;font-size:12px;line-height:12px;color:#1a1a1a;letter-spacing:-0.17px;left:23.80px;white-space:pre;">Nucleic Acid  [C:\Users\TP-SSV\Documents\2024_10_04_Nucleic Acid.twbk]</div>
<div class="r" style="left:1799px;top:217px;width:10px;height:1px;background:#111;"></div>
<svg style="left:1843px;top:211px" width="12" height="12" viewBox="0 0 12 12"><rect x="0.5" y="2.5" width="8.5" height="8.5" rx="1.3" fill="none" stroke="#111" stroke-width="1"/><path d="M3 2.5V2Q3 0.5 4.5 0.5H9.5Q11.5 0.5 11.5 2.5V7.5Q11.5 9 10 9" fill="none" stroke="#111" stroke-width="1"/></svg>
<svg style="left:1889px;top:211px" width="12" height="12" viewBox="0 0 12 12"><path d="M0.8 0.8L11.2 11.2M11.2 0.8L0.8 11.2" stroke="#111" stroke-width="1.05"/></svg>
<div class="t" style="top:235.54px;font-size:12px;line-height:12px;color:#111;left:15.50px;">File</div>
<div class="t" style="top:235.54px;font-size:12px;line-height:12px;color:#111;left:52.60px;">Help</div>
<svg style="left:0;top:254px" width="210" height="64" viewBox="0 254 210 64">
<defs>
<linearGradient id="gG" x1="0" y1="0" x2="0" y2="1"><stop offset="0" stop-color="#8fdca2"/><stop offset="0.3" stop-color="#d4f3dc"/><stop offset="0.45" stop-color="#b8ebc4"/><stop offset="0.52" stop-color="#1ea52c"/><stop offset="0.75" stop-color="#159a22"/><stop offset="0.85" stop-color="#5cc052"/><stop offset="1" stop-color="#1a9a24"/></linearGradient>
<linearGradient id="gR" x1="0" y1="0" x2="0" y2="1"><stop offset="0" stop-color="#7e7e7e"/><stop offset="0.5" stop-color="#a4a4a4"/><stop offset="1" stop-color="#747474"/></linearGradient>
<linearGradient id="bl" x1="0" y1="0" x2="0" y2="1"><stop offset="0" stop-color="#c4c4c4"/><stop offset="0.3" stop-color="#f8f8f8"/><stop offset="0.6" stop-color="#e4e4e4"/><stop offset="0.9" stop-color="#d0d0d0"/><stop offset="1" stop-color="#a8a8a8"/></linearGradient>
<linearGradient id="pb" x1="0" y1="0" x2="1" y2="1"><stop offset="0" stop-color="#5a86c0"/><stop offset="0.6" stop-color="#8ab4e0"/><stop offset="1" stop-color="#3a5a90"/></linearGradient>
<linearGradient id="pp" x1="0" y1="0" x2="0" y2="1"><stop offset="0" stop-color="#f4f4f4"/><stop offset="1" stop-color="#c8c8c8"/></linearGradient>
</defs>
<circle cx="29" cy="279" r="19.2" fill="url(#gR)"/>
<circle cx="29" cy="279" r="17.1" fill="#cfe8d4"/>
<circle cx="29" cy="279" r="16.6" fill="url(#gG)"/>
<path d="M23.5 271Q23 270 24.2 270.6L37.2 277.6Q38.3 278.4 37.2 279.1L24.4 286.8Q23.3 287.4 23.5 286Z" fill="#0b580c"/>
<path d="M80.3 272.3L84 264L94.6 264L91.6 274.8Z" fill="url(#pp)" stroke="#b0b0b0" stroke-width="0.7"/>
<path d="M64.5 281Q66 274 72 273.5L86 275L97 279Q99 283 98.6 287L97 290.5L82 291L66 287Z" fill="#ebebcf"/>
<path d="M67 279Q69.5 273.5 76 273.2L88.5 275.5Q84 278.5 82.5 286.5L68 284Z" fill="url(#pb)"/>
<path d="M81.5 288.2L98.2 286.8L97.5 291L82.5 291.8Z" fill="#505050"/>
<path d="M59.3 284.5L69 283L79.4 287.6L70.2 291.8Z" fill="#e6e6ea" stroke="#404040" stroke-width="0.9"/>
<rect x="109.5" y="262.2" width="27.3" height="19.5" rx="1.8" fill="url(#bl)"/>
<path d="M112.3 271.3H131" stroke="#111" stroke-width="1.3"/><path d="M130.5 269.2L133.8 271.3L130.5 273.4Z" fill="#111"/>
<rect x="156.5" y="261.5" width="27.5" height="20.3" rx="1.8" fill="url(#bl)"/>
<path d="M183.3 270.5V281.5" stroke="#8a8a8a" stroke-width="1"/>
<path d="M159.3 271.3H178" stroke="#111" stroke-width="1.3"/><path d="M177.5 269.2L180.8 271.3L177.5 273.4Z" fill="#111"/>
<path d="M182 267.8A8.4 8.4 0 1 1 175.5 281.8" fill="none" stroke="#e23a2a" stroke-width="4"/>
<path d="M176.2 267.6L183.2 262.6L183.6 272.4Z" fill="#e23a2a"/>
</svg>
<div class="t" style="top:299.87px;font-size:11.5px;line-height:11.5px;left:6.60px;">Measure</div>
<div class="t" style="top:299.87px;font-size:11.5px;line-height:11.5px;left:66.50px;">Print</div>
<div class="t" style="top:299.87px;font-size:11.5px;line-height:11.5px;left:108.30px;">Blank</div>
<div class="t" style="top:299.87px;font-size:11.5px;line-height:11.5px;left:150.40px;">Re-Blank</div>
<div class="r" style="left:8px;top:324px;width:13px;height:13px;background:#0a64c8;border-radius:2.5px;"></div>
<svg style="left:8px;top:324px" width="13" height="13" viewBox="0 0 13 13"><path d="M3.3 6.8L5.4 8.9L9.8 4.4" stroke="#fff" stroke-width="1.1" fill="none"/></svg>
<div class="r" style="left:8px;top:345px;width:13px;height:13px;background:#f6f6f6;border:1px solid #5f5f5f;border-radius:2.5px;"></div>
<div class="r" style="left:8px;top:366px;width:13px;height:13px;background:#f6f6f6;border:1px solid #5f5f5f;border-radius:2.5px;"></div>
<div class="t" style="top:323.70px;font-size:14.3px;line-height:14.3px;left:27.20px;">Add to report</div>
<div class="t" style="top:345.24px;font-size:14.6px;line-height:14.6px;left:27.20px;">Overlay spectra</div>
<div class="t" style="top:365.56px;font-size:14.7px;line-height:14.7px;left:27.20px;">Small sample volume</div>
<div class="r" style="left:0px;top:987px;width:460px;height:6px;background:linear-gradient(#e4e4e4,#a8a8a8 70%,#9a9a9a);"></div>
<svg style="left:210px;top:989px" width="44" height="4" viewBox="0 0 44 4"><rect x="0.5" y="1" width="2" height="2" fill="#fff"/><rect x="0" y="0.3" width="2" height="1.5" fill="#6a6a6a"/><rect x="0" y="0.3" width="1" height="2.5" fill="#6a6a6a"/><rect x="4.5" y="1" width="2" height="2" fill="#fff"/><rect x="4" y="0.3" width="2" height="1.5" fill="#6a6a6a"/><rect x="4" y="0.3" width="1" height="2.5" fill="#6a6a6a"/><rect x="8.5" y="1" width="2" height="2" fill="#fff"/><rect x="8" y="0.3" width="2" height="1.5" fill="#6a6a6a"/><rect x="8" y="0.3" width="1" height="2.5" fill="#6a6a6a"/><rect x="12.5" y="1" width="2" height="2" fill="#fff"/><rect x="12" y="0.3" width="2" height="1.5" fill="#6a6a6a"/><rect x="12" y="0.3" width="1" height="2.5" fill="#6a6a6a"/><rect x="16.5" y="1" width="2" height="2" fill="#fff"/><rect x="16" y="0.3" width="2" height="1.5" fill="#6a6a6a"/><rect x="16" y="0.3" width="1" height="2.5" fill="#6a6a6a"/><rect x="20.5" y="1" width="2" height="2" fill="#fff"/><rect x="20" y="0.3" width="2" height="1.5" fill="#6a6a6a"/><rect x="20" y="0.3" width="1" height="2.5" fill="#6a6a6a"/><rect x="24.5" y="1" width="2" height="2" fill="#fff"/><rect x="24" y="0.3" width="2" height="1.5" fill="#6a6a6a"/><rect x="24" y="0.3" width="1" height="2.5" fill="#6a6a6a"/><rect x="28.5" y="1" width="2" height="2" fill="#fff"/><rect x="28" y="0.3" width="2" height="1.5" fill="#6a6a6a"/><rect x="28" y="0.3" width="1" height="2.5" fill="#6a6a6a"/><rect x="32.5" y="1" width="2" height="2" fill="#fff"/><rect x="32" y="0.3" width="2" height="1.5" fill="#6a6a6a"/><rect x="32" y="0.3" width="1" height="2.5" fill="#6a6a6a"/><rect x="36.5" y="1" width="2" height="2" fill="#fff"/><rect x="36" y="0.3" width="2" height="1.5" fill="#6a6a6a"/><rect x="36" y="0.3" width="1" height="2.5" fill="#6a6a6a"/></svg>
<div class="r" style="left:0px;top:993px;width:460px;height:194px;background:#f0f0f0;"></div>
<div class="r" style="left:1px;top:994px;width:458px;height:30px;background:linear-gradient(#fefefe,#fbfbfb);border:1px solid #d6d6d6;border-radius:3.5px;"></div>
<div class="t" style="top:1004.75px;font-size:11.4px;line-height:11.4px;font-weight:700;color:#0a0a0a;letter-spacing:0.1px;left:50.50px;">Home</div>
<div class="r" style="left:1px;top:1026px;width:458px;height:30px;background:#cce4f7;border:1px solid #1c4d84;border-radius:3.5px;"></div>
<div class="t" style="top:1036.75px;font-size:11.4px;line-height:11.4px;font-weight:700;color:#0a0a0a;letter-spacing:0.1px;left:50.50px;">Measure Nucleic Acid</div>
<div class="r" style="left:1px;top:1058px;width:458px;height:30px;background:linear-gradient(#fefefe,#fbfbfb);border:1px solid #d6d6d6;border-radius:3.5px;"></div>
<div class="t" style="top:1068.75px;font-size:11.4px;line-height:11.4px;font-weight:700;color:#0a0a0a;letter-spacing:0.1px;left:50.50px;">Reports</div>
<div class="r" style="left:1px;top:1090px;width:458px;height:30px;background:linear-gradient(#fefefe,#fbfbfb);border:1px solid #d6d6d6;border-radius:3.5px;"></div>
<div class="t" style="top:1100.75px;font-size:11.4px;line-height:11.4px;font-weight:700;color:#0a0a0a;letter-spacing:0.1px;left:50.50px;">My Data</div>
<div class="r" style="left:1px;top:1122px;width:458px;height:30px;background:linear-gradient(#fefefe,#fbfbfb);border:1px solid #d6d6d6;border-radius:3.5px;"></div>
<div class="t" style="top:1132.75px;font-size:11.4px;line-height:11.4px;font-weight:700;color:#0a0a0a;letter-spacing:0.1px;left:50.50px;">Oligo Calc</div>
<div class="r" style="left:1px;top:1154px;width:458px;height:30px;background:linear-gradient(#fefefe,#fbfbfb);border:1px solid #d6d6d6;border-radius:3.5px;"></div>
<div class="t" style="top:1164.75px;font-size:11.4px;line-height:11.4px;font-weight:700;color:#0a0a0a;letter-spacing:0.1px;left:50.50px;">Options</div>
<svg style="left:0;top:993px" width="50" height="192" viewBox="0 993 50 192">
<defs>
<linearGradient id="rf" x1="0" y1="0" x2="1" y2="1"><stop offset="0" stop-color="#c87a20"/><stop offset="0.5" stop-color="#f0a030"/><stop offset="1" stop-color="#d88a28"/></linearGradient>
<linearGradient id="fw" x1="0" y1="0" x2="0" y2="1"><stop offset="0" stop-color="#ffffff"/><stop offset="1" stop-color="#c8dcea"/></linearGradient>
<linearGradient id="tm" x1="0" y1="0" x2="1" y2="0"><stop offset="0" stop-color="#a8a8a8"/><stop offset="0.4" stop-color="#f8f8f8"/><stop offset="1" stop-color="#c0c0c0"/></linearGradient>
<linearGradient id="cal" x1="0" y1="0" x2="1" y2="1"><stop offset="0" stop-color="#8ab8e8"/><stop offset="1" stop-color="#4a80c8"/></linearGradient>
<radialGradient id="bb" cx="0.4" cy="0.35" r="0.7"><stop offset="0" stop-color="#f0f8ff"/><stop offset="1" stop-color="#7aa8d0"/></radialGradient>
<radialGradient id="gb" cx="0.4" cy="0.35" r="0.7"><stop offset="0" stop-color="#a0e8a0"/><stop offset="1" stop-color="#108a10"/></radialGradient>
</defs>
<path d="M9.4 1012.5L13.8 1011L23 1017.9L19.1 1019.6Z" fill="#1a6a9a"/>
<path d="M13.8 1002L22.6 1007.1L23 1017.9L13.8 1014Z" fill="#4a9ad0"/>
<rect x="16.5" y="1007" width="2.4" height="4" fill="#1a5a8a"/>
<path d="M22.6 1007.1L36.7 1004.7L36.7 1015L23 1017.9Z" fill="url(#fw)"/>
<rect x="28.4" y="1008" width="3.2" height="8.4" fill="#1a6090"/>
<path d="M17 997.9L31.3 997.9L37.7 1003.5L22.6 1007.1L12.3 1002Z" fill="url(#rf)" stroke="#8a5010" stroke-width="0.4"/>
<rect x="17" y="997" width="3.6" height="2.5" fill="#a86018"/>
<path d="M9.6 1042.8L19.6 1042.8L19.6 1048.1L12 1048.1Q9.6 1046 9.6 1042.8Z" fill="#101010"/>
<path d="M19.6 1043.5L36.7 1047.5L35.5 1051L19 1047.5Z" fill="#f2d448" stroke="#c8a020" stroke-width="0.5"/>
<path d="M32.3 1048.2L37.7 1049.2L36.8 1053.5L31.5 1052Z" fill="#e0e0e0" stroke="#999" stroke-width="0.5"/>
<rect x="10.4" y="1028.6" width="15.1" height="18.5" rx="4" fill="url(#tm)" stroke="#808080" stroke-width="0.6"/>
<rect x="20.6" y="1033" width="4.9" height="9.3" fill="#e8c028"/>
<ellipse cx="15.4" cy="1037" rx="3.6" ry="7.6" fill="#f8f8f8" stroke="#707070" stroke-width="0.9"/>
<rect x="15.5" y="1061.4" width="15.1" height="18.5" rx="1" fill="#e0404a" stroke="#902028" stroke-width="0.6"/>
<path d="M13.3 1064.5H16.7M13.3 1067.5H16.7M13.3 1070.5H16.7M13.3 1073.5H16.7M13.3 1076.5H16.7" stroke="#111" stroke-width="1.1"/>
<rect x="21.1" y="1065.5" width="15.6" height="19.3" rx="1" fill="#f04454" stroke="#8a1a24" stroke-width="0.7"/>
<rect x="25" y="1070" width="6.6" height="3.3" rx="1" fill="#fff" stroke="#8a1a24" stroke-width="0.5"/>
<path d="M19.6 1068.5H22.6M19.6 1071.5H22.6M19.6 1074.5H22.6M19.6 1077.5H22.6M19.6 1080.5H22.6" stroke="#111" stroke-width="1.1"/>
<path d="M11.3 1112L19.6 1112L19.6 1116.8L15 1116.8Z" fill="#202838"/>
<path d="M14.5 1093.5L16.5 1092.1L36.2 1092.1L36.2 1116.8L16.5 1116.8L14.5 1115Z" fill="#a8b8cc" stroke="#5a6a80" stroke-width="0.6"/>
<rect x="14.5" y="1093" width="4" height="23.8" fill="#6a7a90"/>
<rect x="24" y="1096" width="5" height="1.8" fill="#fff"/>
<path d="M21 1103L23 1100L34 1100.5L35.7 1104.8L21 1105.5Z" fill="#f0e060" stroke="#c0a020" stroke-width="0.5"/>
<rect x="20.6" y="1105.3" width="15.6" height="11.5" fill="#b8c6d8" stroke="#5a6a80" stroke-width="0.6"/>
<rect x="26.5" y="1108.5" width="5.5" height="2" rx="1" fill="#fff"/>
<path d="M27 1122C34 1126 39.5 1130 38.5 1136C37.5 1142 30 1146 27 1151M38.5 1122C31 1126 28.5 1132 31 1137C33 1142 37.5 1146 38.5 1151" stroke="#f07020" stroke-width="2.8" fill="none"/>
<path d="M28 1125.5H36M30.5 1147H35.5" stroke="#1a4a8a" stroke-width="1.2"/>
<path d="M9.1 1130.8L24.5 1124.4L35.2 1142.5L18.7 1149.3Z" fill="url(#cal)" stroke="#1a3a7a" stroke-width="1"/>
<path d="M13.5 1130.5L22.5 1127L24.5 1130L15.5 1133.5Z" fill="#e0f0ff"/>
<path d="M16 1136L26 1132M17.5 1139L27.5 1135M19 1142L29 1138M20.5 1145L30.5 1141" stroke="#f4faff" stroke-width="1.5" stroke-dasharray="2 1"/>
<rect x="12.3" y="1160" width="18.3" height="17.6" fill="#cfe4f2" stroke="#5a7a9a" stroke-width="0.9"/>
<circle cx="17.9" cy="1159.5" r="3.6" fill="url(#bb)" stroke="#4a6a8a" stroke-width="0.5"/>
<circle cx="17.9" cy="1178" r="3.6" fill="url(#bb)" stroke="#4a6a8a" stroke-width="0.5"/>
<path d="M19.5 1165.5L23.2 1163.8L24.5 1167.8L35 1158.5L37 1160.5L36 1163.5L23.8 1175.5Z" fill="#e81010" stroke="#9a0000" stroke-width="0.5"/>
<circle cx="17.9" cy="1168.8" r="3.6" fill="url(#gb)" stroke="#1a5a1a" stroke-width="0.5"/>
</svg>
<div class="r" style="left:0px;top:1185px;width:460px;height:32px;background:linear-gradient(#f7f7f7,#ececec);border-top:1px solid #7a7a7a;border-bottom:2px solid #808080;border-left:1px solid #8a8a8a;border-right:1px solid #8a8a8a;"></div>
<svg style="left:439px;top:1194px" width="12" height="14" viewBox="0 0 12 14"><path d="M1.5 1L5.2 4.5L1.5 8M5.5 1L9.2 4.5L5.5 8" stroke="#000" stroke-width="1.2" fill="none"/><path d="M3 10.5H8.5L5.75 13.2Z" fill="#000"/></svg>
<div class="r" style="left:0px;top:1217px;width:1920px;height:22px;background:#f0f0f0;border-top:1px solid #d0d0d0;"></div>
<svg style="left:52px;top:1220px" width="16" height="16" viewBox="0 0 16 16"><path d="M8 0.5L15 2.5V8Q15 13 8 15.5Q1 13 1 8V2.5Z" fill="#5aa86a" stroke="#708070" stroke-width="0.9"/><path d="M4.5 8L7 10.5L11.5 5.5" stroke="#fff" stroke-width="1.8" fill="none"/></svg>
<div class="t" style="top:1223.38px;font-size:11.6px;line-height:11.6px;color:#111;letter-spacing:-0.75px;left:1865.30px;">TP-SSV</div>
<div class="r" style="left:0px;top:1239px;width:1920px;height:48px;background:linear-gradient(to right,#e4ecf7 0%,#e0e8f6 20%,#d8dff5 45%,#d9e0f5 60%,#e2ebf7 76%,#e4eef8 100%);border-top:1px solid #c4c8d2;"></div>
<svg style="left:0;top:1239px" width="1920" height="48" viewBox="0 1239 1920 48">
<defs>
<linearGradient id="wl" gradientUnits="userSpaceOnUse" x1="705" y1="1252" x2="728" y2="1275"><stop offset="0" stop-color="#3cc8f8"/><stop offset="1" stop-color="#0a72d6"/></linearGradient>
<linearGradient id="eg" x1="0" y1="0" x2="1" y2="1"><stop offset="0" stop-color="#36b8e8"/><stop offset="0.6" stop-color="#2a9ad8"/><stop offset="1" stop-color="#4ad07a"/></linearGradient>
<linearGradient id="fy" x1="0" y1="0" x2="0" y2="1"><stop offset="0" stop-color="#ffd84a"/><stop offset="1" stop-color="#f6b91e"/></linearGradient>
<radialGradient id="pl" cx="0.6" cy="0.3" r="0.7"><stop offset="0" stop-color="#ff6a7a"/><stop offset="1" stop-color="#b0107a"/></radialGradient>
</defs>
<path d="M19.5 1260.8H33.5M19.5 1265H36.5Q39.2 1265 38.8 1267.5Q38.3 1269.5 35.5 1269" stroke="#7f9ec0" stroke-width="2.2" fill="none"/>
<circle cx="35" cy="1268.5" r="2.3" fill="#7f9ec0"/>
<path d="M33 1260.8Q35 1260.5 35 1258" stroke="#7f9ec0" stroke-width="2.2" fill="none"/>
<circle cx="38" cy="1253" r="8" fill="#c42b2b"/><path d="M36.3 1250.2L38.8 1248.6V1257.6" stroke="#fff" stroke-width="1.3" fill="none"/>
<rect x="705" y="1252" width="11" height="11" fill="url(#wl)"/><rect x="717" y="1252" width="11" height="11" fill="url(#wl)"/>
<rect x="705" y="1264" width="11" height="11" fill="url(#wl)"/><rect x="717" y="1264" width="11" height="11" fill="url(#wl)"/>
<rect x="742" y="1248" width="217" height="30" rx="15" fill="#f6f8fd" stroke="#d4d9e8" stroke-width="1"/>
<circle cx="759" cy="1262" r="5.2" fill="none" stroke="#222" stroke-width="1.6"/><path d="M762.8 1265.8L766.8 1269.8" stroke="#222" stroke-width="1.8"/>
<clipPath id="pill"><rect x="742" y="1248" width="217" height="30" rx="15"/></clipPath>
<g clip-path="url(#pill)">
<ellipse cx="945" cy="1259" rx="17" ry="11" fill="url(#pl)"/>
<path d="M905 1280Q912 1266 930 1267Q948 1268 960 1262L960 1280Z" fill="#2a3d8c"/>
<path d="M918 1278Q930 1272 948 1272" stroke="#5a7ad0" stroke-width="2" fill="none"/>
<circle cx="914" cy="1272" r="2.2" fill="#7a9ab8"/>
<circle cx="926" cy="1270" r="0.6" fill="#fff"/><circle cx="936" cy="1274" r="0.6" fill="#fff"/><circle cx="946" cy="1270" r="0.6" fill="#fff"/>
</g>
<path d="M912 1254L914 1252L934 1268L931 1271Z" fill="#b8b0c8" stroke="#6a6080" stroke-width="0.6"/>
<path d="M929 1269L934 1268L932 1273Z" fill="#7ab0ff"/>
<rect x="973" y="1258" width="18" height="16" fill="#1a1a1a"/>
<rect x="979" y="1252" width="16" height="16" fill="#f8f8f8" stroke="#e0e0e0" stroke-width="0.6"/>
<rect x="979" y="1258" width="12" height="10" fill="#c4c4c4"/>
<defs>
<linearGradient id="eg2" x1="0" y1="1" x2="1" y2="0"><stop offset="0" stop-color="#1a6fd0"/><stop offset="0.55" stop-color="#2ab0e0"/><stop offset="1" stop-color="#6ee07a"/></linearGradient>
<linearGradient id="ap" x1="0" y1="0" x2="1" y2="0"><stop offset="0" stop-color="#d8e0f2"/><stop offset="0.5" stop-color="#9aaee0"/><stop offset="1" stop-color="#5a78c0"/></linearGradient>
</defs>
<circle cx="1073" cy="1263" r="12" fill="url(#eg2)"/>
<path d="M1061.2 1262Q1062 1272 1072 1275Q1080 1276 1084 1270Q1078 1273 1072 1271Q1065 1268 1066 1261Q1066 1257 1072 1256Q1066 1254 1061.2 1262Z" fill="#1a5ab0"/>
<path d="M1068 1264Q1068 1259 1073 1259Q1078 1259.5 1078 1263.5Q1078 1266 1081 1266.5Q1084 1266.5 1085 1265Q1084.5 1269 1082 1270.5Q1076 1272 1071 1269Q1068 1267 1068 1264Z" fill="#dceefa"/>
<path d="M1070.5 1264.5Q1071 1262 1073.5 1262Q1076 1262.5 1076 1265Q1076 1267.5 1073.5 1267.5Q1070.5 1267 1070.5 1264.5Z" fill="#2a88d8"/>
<rect x="1098" y="1244" width="38" height="38" rx="4" fill="#eef0fa"/>
<rect x="1105" y="1251" width="24" height="24" fill="url(#ap)" stroke="#4a5a8a" stroke-width="0.5"/>
<path d="M1106.5 1251.3H1127.5Q1128.7 1251.3 1128.7 1252.8V1255.5Q1128.2 1257.8 1125.5 1257.8H1108.5Q1105.8 1257.8 1105.3 1255.5V1252.8Q1105.3 1251.3 1106.5 1251.3Z" fill="#000"/>
<path d="M1108.5 1267.2H1125.5Q1128.2 1267.2 1128.7 1269.5V1272.2Q1128.7 1273.8 1127.5 1273.8H1106.5Q1105.3 1273.8 1105.3 1272.2V1269.5Q1105.8 1267.2 1108.5 1267.2Z" fill="#000"/>
<path d="M1111 1258.5H1123L1121.5 1262.5L1123 1267.3H1111L1112.5 1262.5Z" fill="#2e3c94"/>
<ellipse cx="1117" cy="1262.6" rx="2.2" ry="1.2" fill="#aab8e8"/>
<rect x="1109" y="1279" width="16" height="3" rx="1.5" fill="#1a6cd0"/>
<path d="M1161 1251Q1173 1251 1172 1263Q1171 1268 1166 1267Q1162 1267 1163 1271Q1163 1275 1158 1275Q1149 1274 1149 1264Q1149 1251 1161 1251Z" fill="#3aa0e0"/>
<circle cx="1153" cy="1264" r="2" fill="#e0502a"/><circle cx="1156" cy="1258" r="2" fill="#3aa83a"/><circle cx="1161" cy="1255" r="2" fill="#f0c020"/>
<path d="M1167.5 1261L1169 1275" stroke="#a07a30" stroke-width="2"/><rect x="1166" y="1258.5" width="3.6" height="3" fill="#e8d8b0"/><path d="M1161.5 1262.5V1266.5M1159.5 1264.5H1163.5" stroke="#e8f4ff" stroke-width="1"/>
<rect x="1158" y="1279" width="6" height="3" rx="1.5" fill="#777"/>
<path d="M1193 1254Q1193 1252 1195 1252H1202L1205 1255H1216Q1217 1255 1217 1257V1272Q1217 1274 1215 1274H1195Q1193 1274 1193 1272Z" fill="url(#fy)"/>
<rect x="1197" y="1266" width="16" height="8" rx="1" fill="#1a72d0"/>
<path d="M1193 1254Q1193 1252 1195 1252H1202L1205 1255V1257H1193Z" fill="#e0a018"/><rect x="1202" y="1279" width="6" height="3" rx="1.5" fill="#777"/>
<path d="M1690 1266L1695 1261L1700 1266" stroke="#222" stroke-width="1.3" fill="none"/>
<rect x="1763.5" y="1256" width="12" height="10" fill="none" stroke="#222" stroke-width="1.1"/>
<path d="M1767 1270H1773M1770 1266V1270" stroke="#222" stroke-width="1.1"/>
<rect x="1775.5" y="1255.5" width="3" height="5" rx="1" fill="#fff" stroke="#222" stroke-width="0.9"/>
<path d="M1788 1260H1791L1795 1256.5V1268.5L1791 1265H1788Z" fill="none" stroke="#222" stroke-width="1"/>
<path d="M1797 1260Q1799 1262.5 1797 1265M1799.5 1258Q1803 1262.5 1799.5 1267M1802 1256Q1807 1262.5 1802 1269" stroke="#222" stroke-width="1" fill="none"/>
<path d="M1892 1256.5Q1897 1256.5 1897 1262V1266.5L1899 1268.5H1885L1887 1266.5V1262Q1887 1256.5 1892 1256.5Z" fill="#0b4aa8"/>
<rect x="1889.5" y="1269" width="5" height="2" rx="1" fill="#0b4aa8"/>
</svg>
<div class="t" style="top:1249.25px;font-size:11.4px;line-height:11.4px;color:#1a1a1a;letter-spacing:-0.35px;left:51.00px;">13°C</div>
<div class="t" style="top:1264.19px;font-size:12.3px;line-height:12.3px;color:#5a5a5a;left:51.20px;">Windy</div>
<div class="t" style="top:1257.30px;font-size:13px;line-height:13px;color:#5f5f5f;left:778.50px;">Search</div>
<div class="t" style="top:1258.52px;font-size:11.2px;line-height:11.2px;color:#1a1a1a;letter-spacing:-0.6px;left:1722.70px;">FRA</div>
<div class="t" style="top:1249.38px;font-size:11.6px;line-height:11.6px;color:#1a1a1a;right:43.60px;text-align:right;">13:09</div>
<div class="t" style="top:1265.15px;font-size:11.4px;line-height:11.4px;color:#1a1a1a;right:43.60px;text-align:right;">04.10.2024</div>
</body></html>
